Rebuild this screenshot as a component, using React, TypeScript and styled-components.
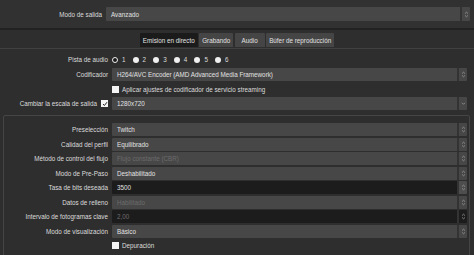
import styled, { createGlobalStyle } from "styled-components";

const GlobalStyle = createGlobalStyle`
  html, body {
    margin: 0;
    padding: 0;
    background: #2e2e2e;
  }
  #root {
    width: 474px;
    height: 255px;
    overflow: hidden;
  }
`;

const Page = styled.div`
  width: 474px;
  height: 255px;
  overflow: hidden;
  background: #2e2e2e;
  color: #dcdcdc;
  font-family: "Liberation Sans", Arial, sans-serif;
  font-size: 6.3px;
  display: flex;
  flex-direction: column;
  & > * {
    flex-shrink: 0;
  }
`;

const TopSection = styled.div`
  background: #313131;
  padding: 7px 4px 0 0;
  height: 21px;
  border-bottom: 2px solid #222;
`;

const Row = styled.div<{ $labelWidth?: number; $height?: number }>`
  display: grid;
  grid-template-columns: ${(p) => p.$labelWidth ?? 108}px 1fr;
  column-gap: 4px;
  align-items: center;
  height: ${(p) => p.$height ?? 13}px;
`;

const Label = styled.span`
  text-align: right;
  white-space: nowrap;
  display: flex;
  justify-content: flex-end;
  align-items: center;
  gap: 4px;
`;

const Combo = styled.div<{ $dark?: boolean; $disabled?: boolean }>`
  height: 100%;
  display: flex;
  align-items: center;
  background: ${(p) => (p.$dark ? "#1c1c1c" : "#474747")};
  color: ${(p) => (p.$disabled ? "#6c6c6c" : "#e2e2e2")};
  border-radius: 1px;
  white-space: nowrap;
  overflow: hidden;
`;

const ComboText = styled.span`
  flex: 1;
  padding-left: 5px;
`;

const ArrowBox = styled.div<{ $boxed?: boolean }>`
  width: 10px;
  height: 100%;
  display: flex;
  align-items: center;
  justify-content: center;
  box-sizing: border-box;
  border-left: 2px solid #333;
  background: ${(p) => (p.$boxed ? "#4e4e4e" : "transparent")};
`;

const TabBar = styled.div`
  display: flex;
  justify-content: center;
  gap: 1.5px;
  margin-top: 3px;
  padding-bottom: 1px;
  border-bottom: 1px solid #414141;
`;

const Tab = styled.div<{ $active?: boolean }>`
  height: 14px;
  min-width: 30px;
  padding: 0 3px;
  box-sizing: border-box;
  display: flex;
  align-items: center;
  justify-content: center;
  background: ${(p) => (p.$active ? "#1b1b1b" : "#454545")};
  color: #e2e2e2;
  border-radius: 1px 1px 0 0;
`;

const Content = styled.div`
  padding: 4px 7px 0 0;
  display: flex;
  flex-direction: column;
  gap: 2px;
`;

const Radios = styled.div`
  display: flex;
  align-items: center;
`;

const RadioItem = styled.div`
  width: 20.6px;
  display: flex;
  align-items: center;
  gap: 4px;
`;

const RadioDot = styled.span<{ $checked?: boolean }>`
  width: 6px;
  height: 6px;
  border-radius: 50%;
  box-sizing: border-box;
  background: ${(p) => (p.$checked ? "#1c1c1c" : "#f0f0f0")};
  border: ${(p) => (p.$checked ? "1.6px solid #f0f0f0" : "none")};
`;

const CheckRow = styled.div`
  display: flex;
  align-items: center;
  gap: 3px;
  white-space: nowrap;
`;

const Box = styled.span`
  width: 7px;
  height: 7px;
  background: #f4f4f4;
  display: inline-flex;
  align-items: center;
  justify-content: center;
  flex-shrink: 0;
`;

const Group = styled.div`
  margin: 5px 4px 0 3px;
  border: 1px solid #454545;
  border-radius: 2px;
  padding: 7px 2px 6px 0;
  display: flex;
  flex-direction: column;
  gap: 1.5px;
`;

const UpDown = () => (
  <svg width="5" height="7" viewBox="0 0 5 7">
    <polyline points="1,2.6 2.5,1.2 4,2.6" fill="none" stroke="#9a9a9a" strokeWidth="0.8" />
    <polyline points="1,4.4 2.5,5.8 4,4.4" fill="none" stroke="#9a9a9a" strokeWidth="0.8" />
  </svg>
);

const Down = () => (
  <svg width="5" height="5" viewBox="0 0 5 5">
    <polyline points="1,1.8 2.5,3.3 4,1.8" fill="none" stroke="#9a9a9a" strokeWidth="0.8" />
  </svg>
);

const Tick = () => (
  <svg width="6" height="6" viewBox="0 0 6 6">
    <polyline points="1,3 2.4,4.5 5,1.2" fill="none" stroke="#222" strokeWidth="1" />
  </svg>
);

type Field = {
  label: string;
  value: string;
  dark?: boolean;
  disabled?: boolean;
  boxed?: boolean;
};

const groupFields: Field[] = [
  { label: "Preselección", value: "Twitch" },
  { label: "Calidad del perfil", value: "Equilibrado" },
  { label: "Método de control del flujo", value: "Flujo constante (CBR)", disabled: true },
  { label: "Modo de Pre-Paso", value: "Deshabilitado" },
  { label: "Tasa de bits deseada", value: "3500", dark: true, boxed: true },
  { label: "Datos de relleno", value: "Habilitado", disabled: true },
  { label: "Intervalo de fotogramas clave", value: "2,00", dark: true, disabled: true },
  { label: "Modo de visualización", value: "Básico" },
];

function App() {
  return (
    <Page>
      <GlobalStyle />
      <TopSection>
        <Row $labelWidth={102} $height={14}>
          <Label>Modo de salida</Label>
          <Combo>
            <ComboText>Avanzado</ComboText>
            <ArrowBox>
              <UpDown />
            </ArrowBox>
          </Combo>
        </Row>
      </TopSection>

      <TabBar>
        <Tab $active>Emision en directo</Tab>
        <Tab>Grabando</Tab>
        <Tab>Audio</Tab>
        <Tab>Búfer de reproducción</Tab>
      </TabBar>

      <Content>
        <Row>
          <Label>Pista de audio</Label>
          <Radios>
            {[1, 2, 3, 4, 5, 6].map((n) => (
              <RadioItem key={n}>
                <RadioDot $checked={n === 1} />
                {n}
              </RadioItem>
            ))}
          </Radios>
        </Row>
        <Row>
          <Label>Codificador</Label>
          <Combo>
            <ComboText>H264/AVC Encoder (AMD Advanced Media Framework)</ComboText>
            <ArrowBox>
              <UpDown />
            </ArrowBox>
          </Combo>
        </Row>
        <Row $height={12}>
          <span />
          <CheckRow>
            <Box />
            Aplicar ajustes de codificador de servicio streaming
          </CheckRow>
        </Row>
        <Row>
          <Label>
            Cambiar la escala de salida
            <Box>
              <Tick />
            </Box>
          </Label>
          <Combo>
            <ComboText>1280x720</ComboText>
            <ArrowBox>
              <Down />
            </ArrowBox>
          </Combo>
        </Row>
      </Content>

      <Group>
        {groupFields.map((f) => (
          <Row key={f.label} $labelWidth={104}>
            <Label>{f.label}</Label>
            <Combo $dark={f.dark} $disabled={f.disabled}>
              <ComboText>{f.value}</ComboText>
              <ArrowBox $boxed={f.boxed}>
                <UpDown />
              </ArrowBox>
            </Combo>
          </Row>
        ))}
        <Row $labelWidth={104}>
          <span />
          <CheckRow>
            <Box />
            Depuración
          </CheckRow>
        </Row>
      </Group>
    </Page>
  );
}

export default App;
